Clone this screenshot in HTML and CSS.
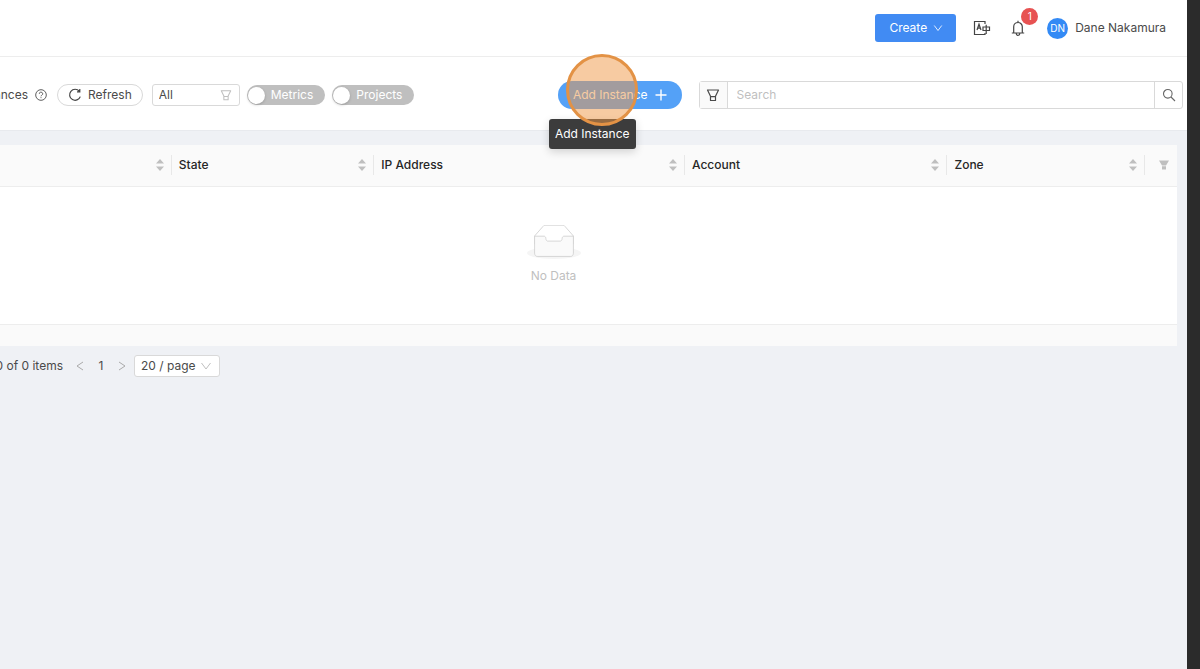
FILE: index.html
```
<!DOCTYPE html>
<html lang="en">
<head>
<meta charset="utf-8">
<title>Instances</title>
<link rel="stylesheet" href="styles.css">
</head>
<body>
<svg class="defs" aria-hidden="true">
  <symbol id="sort" viewBox="0 0 8 12"><path fill="#bfbfbf" d="M4 0 8 4.500H0zM4 12 0 7.500h8z"/></symbol>
  <symbol id="funnel" viewBox="0 0 14 14"><path fill="none" stroke="currentColor" stroke-width="1.200" stroke-linejoin="round" d="M1.500 2h11L9.500 8.200V12.500h-5V8.200zM4.500 8.700h5"/></symbol>
  <symbol id="down" viewBox="0 0 12 12"><path fill="none" stroke="currentColor" stroke-width="1" d="M1.500 3 6 9l4.500-6"/></symbol>
</svg>
<div class="app">
  <div class="page">
    <header class="header">
      <button class="create">Create <svg class="chev"><use href="#down"/></svg></button>
      <button class="icon-button" aria-label="Language">
        <svg class="lang" viewBox="0 0 18 16" fill="none" stroke="#444" stroke-width="1.200"><path d="M12 4V1.500H1.500v13H12V13"/><path d="M4 10 6 4.200 8 10M4.600 8.200h2.800M10 7h6.500v3.500H10zM13.200 4.800v9.200"/></svg>
      </button>
      <button class="icon-button bell-button" aria-label="Notifications">
        <svg class="bell" viewBox="0 0 14 16" fill="none" stroke="#444" stroke-width="1.200"><path d="M2.700 13V6.800a4.300 4.300 0 0 1 8.600 0V13M.800 13h12.400M7 2.500V.800M5.200 13.500a1.800 1.800 0 0 0 3.600 0"/></svg>
        <span class="badge">1</span>
      </button>
      <a class="user" href="#"><span class="avatar">DN</span>Dane Nakamura</a>
    </header>
    <div class="toolbar">
      <div class="filters">
        <span class="crumb">ances</span>
        <svg class="help" viewBox="0 0 14 14" fill="none" stroke="#555" stroke-width="1.100"><circle cx="7" cy="7" r="6.200"/><path d="M5 5.600a2 1.900 0 1 1 3 1.600q-1 .500-1 1.300M7 9.600v1.100"/></svg>
        <button class="refresh"><svg viewBox="0 0 14 14" fill="none" stroke="#444" stroke-width="1.200"><path d="M11.300 3.200A5.500 5.500 0 1 0 12.300 8.600M11.800 1v2.800H9"/></svg>Refresh</button>
        <div class="select all">
          <select aria-label="Filter"><option>All</option></select>
          <svg><use href="#funnel"/></svg>
        </div>
        <label class="switch"><input type="checkbox">Metrics</label>
        <label class="switch"><input type="checkbox">Projects</label>
      </div>
      <div class="actions">
        <div class="add-wrap">
          <button class="add">Add Instance <svg viewBox="0 0 12 12"><path stroke="#fff" stroke-width="1.400" d="M6 .500v11M.500 6h11"/></svg></button>
          <div class="tooltip" role="tooltip">Add Instance</div>
          <div class="pointer"></div>
        </div>
        <form class="search">
          <button type="button" aria-label="Search filters"><svg><use href="#funnel"/></svg></button>
          <input type="text" placeholder="Search" aria-label="Search">
          <button type="submit" aria-label="Search"><svg viewBox="0 0 14 14" fill="none" stroke="#666" stroke-width="1.100"><circle cx="5.800" cy="5.800" r="4.300"/><path d="m9 9 4 4"/></svg></button>
        </form>
      </div>
    </div>
    <main class="content">
      <table class="grid">
        <colgroup><col class="c-name"><col class="c-state"><col class="c-ip"><col class="c-account"><col class="c-zone"><col></colgroup>
        <thead>
          <tr>
            <th><div class="cell"><span></span><svg><use href="#sort"/></svg></div></th>
            <th><div class="cell">State<svg><use href="#sort"/></svg></div></th>
            <th><div class="cell">IP Address<svg><use href="#sort"/></svg></div></th>
            <th><div class="cell">Account<svg><use href="#sort"/></svg></div></th>
            <th><div class="cell">Zone<svg><use href="#sort"/></svg></div></th>
            <th><div class="cell last"><svg class="filled" viewBox="0 0 10 10"><path fill="#bfbfbf" d="M0 .500h10L7 5.500H3zM3 6.300h4V9.500H3z"/></svg></div></th>
          </tr>
        </thead>
        <tbody>
          <tr><td colspan="6">
            <div class="empty">
              <svg viewBox="0 0 64 41"><ellipse cx="32" cy="33" rx="32" ry="7" fill="#f5f5f5"/><g stroke="#d0d0d0"><path fill="#fff" d="M55 12.760 44.854 1.258C44.367.474 43.656 0 42.907 0H21.093c-.749 0-1.460.474-1.947 1.257L9 12.761V22h46z"/><path fill="#fafafa" d="M41.613 15.931c0-1.605.994-2.930 2.227-2.931H55v20.137C55 35.260 53.680 37 52.050 37h-40.100C10.320 37 9 35.259 9 33.137V13h11.160c1.233 0 2.227 1.323 2.227 2.928v.022c0 1.605 1.005 2.901 2.237 2.901h14.752c1.232 0 2.237-1.308 2.237-2.913z"/></g></svg>
              No Data
            </div>
          </td></tr>
        </tbody>
        <tfoot><tr><td colspan="6"></td></tr></tfoot>
      </table>
      <nav class="pager" aria-label="Pagination">
        <span class="total">0 of 0 items</span>
        <button aria-label="Previous page"><svg viewBox="0 0 8 10"><path d="M7 1 1 5l6 4"/></svg></button>
        <button class="current">1</button>
        <button aria-label="Next page"><svg viewBox="0 0 8 10"><path d="m1 1 6 4-6 4"/></svg></button>
        <div class="select size">
          <select aria-label="Page size"><option>20 / page</option></select>
          <svg><use href="#down"/></svg>
        </div>
      </nav>
    </main>
  </div>
</div>
</body>
</html>
```
FILE: styles.css
```
* { box-sizing: border-box; }
body {
  margin: 0;
  font: 12px/20px Inter, "Liberation Sans", sans-serif;
  color: #4a4a4a;
  background: #2b2b2b;
}
button, input, select { font: inherit; color: inherit; margin: 0; }
button { padding: 0; border: 0; background: none; cursor: pointer; }
svg { display: block; flex: none; }
.defs { position: absolute; width: 0; height: 0; }

.app { min-height: 100vh; padding-right: 13px; display: flex; }
.page { flex: 1; min-width: 0; background: #eff1f5; }

.header {
  display: flex;
  align-items: center;
  justify-content: flex-end;
  height: 57px;
  padding-right: 21px;
  background: #fff;
  border-bottom: 1px solid #ededed;
}
.create {
  display: flex;
  align-items: center;
  gap: 6px;
  height: 28px;
  padding: 0 13px 0 14px;
  border-radius: 3px;
  background: #418bf3;
  color: #fff;
}
.chev { width: 10px; height: 10px; }
.icon-button { position: relative; margin-left: 17px; }
.lang { width: 18px; height: 16px; }
.bell-button { margin-left: 20px; }
.bell { width: 14px; height: 16px; }
.badge {
  position: absolute;
  left: 10px;
  top: -12px;
  width: 17px;
  height: 17px;
  border-radius: 50%;
  background: #e75252;
  color: #fff;
  font-size: 10px;
  line-height: 17px;
}
.user {
  display: flex;
  align-items: center;
  gap: 7px;
  margin-left: 22px;
  color: #4a4a4a;
  text-decoration: none;
}
.avatar {
  width: 21px;
  height: 21px;
  border-radius: 50%;
  background: #338af5;
  color: #fff;
  font-size: 10px;
  line-height: 21px;
  text-align: center;
}

.toolbar {
  display: flex;
  align-items: center;
  padding: 24px 0 21px;
  background: #fff;
  border-bottom: 1px solid #e8eaee;
}
.filters { display: flex; align-items: center; width: 47%; }
.crumb { display: flex; justify-content: flex-end; width: 28px; }
.help { width: 12px; height: 12px; margin-left: 7px; }
.refresh {
  display: flex;
  align-items: center;
  gap: 6px;
  height: 22px;
  margin: 0 9px 0 10px;
  padding: 0 10px;
  border: 1px solid #d9d9d9;
  border-radius: 11px;
}
.refresh svg { width: 14px; height: 14px; }
.select { position: relative; }
.select select {
  appearance: none;
  width: 100%;
  height: 22px;
  padding: 0 6px;
  border: 1px solid #d9d9d9;
  border-radius: 3px;
  background: #fff;
}
.select svg {
  position: absolute;
  right: 8px;
  top: 5px;
  width: 12px;
  height: 12px;
  color: #bfbfbf;
  pointer-events: none;
}
.all { width: 88px; }
.switch {
  display: flex;
  align-items: center;
  gap: 6px;
  height: 20px;
  margin-left: 7px;
  padding: 0 12px 0 1px;
  border-radius: 10px;
  background: #bfbfbf;
  color: #fff;
}
.switch input {
  appearance: none;
  width: 17px;
  height: 17px;
  margin: 0;
  border-radius: 50%;
  background: #fff;
  box-shadow: 0 1px 3px rgba(0, 0, 0, .2);
}

.actions { display: flex; flex: 1; gap: 17px; padding-right: 4px; }
.add-wrap { position: relative; }
.add {
  display: flex;
  align-items: center;
  gap: 7px;
  height: 28px;
  padding: 0 15px;
  border-radius: 14px;
  background: #54a1f7;
  color: #fff;
  white-space: nowrap;
}
.add svg { width: 12px; height: 12px; }
.tooltip {
  position: absolute;
  left: -9px;
  top: 38px;
  z-index: 1;
  padding: 5px 6px;
  border-radius: 3px;
  background: #3c3c3c;
  color: #fff;
  white-space: nowrap;
  box-shadow: 0 3px 8px rgba(0, 0, 0, .16);
}
.pointer {
  position: absolute;
  left: 8px;
  top: -27px;
  z-index: 2;
  width: 72px;
  height: 72px;
  border: 3px solid #e39245;
  border-radius: 50%;
  background: rgba(239, 151, 69, .5);
  pointer-events: none;
}
.search {
  display: flex;
  flex: 1;
  height: 28px;
  border: 1px solid #d9d9d9;
  border-radius: 3px;
}
.search button { display: grid; place-items: center; width: 27px; }
.search button:first-child { background: #fafafa; }
.search svg { width: 14px; height: 14px; }
.search input {
  flex: 1;
  min-width: 0;
  padding: 0 9px;
  border: solid #d9d9d9;
  border-width: 0 1px;
  outline: 0;
}
.search input::placeholder { color: #bfbfbf; opacity: 1; }

.content { padding-top: 14px; }
.grid {
  width: calc(100% - 10px);
  border-collapse: collapse;
  table-layout: fixed;
  background: #fff;
}
.c-name { width: 14.6%; }
.c-state { width: 17.2%; }
.c-ip { width: 26.4%; }
.c-account { width: 22.3%; }
.c-zone { width: 16.8%; }
th, td { padding: 0; }
th {
  height: 41px;
  background: #fafafa;
  border-bottom: 1px solid #ededed;
  color: #262626;
  font-weight: 500;
}
.cell {
  display: flex;
  align-items: center;
  justify-content: space-between;
  height: 20px;
  padding: 0 7px;
  border-right: 1px solid #e8e8e8;
}
.cell svg { width: 8px; height: 12px; }
.cell.last { justify-content: center; padding-left: 12px; border: 0; }
.cell .filled { width: 10px; height: 10px; }
.empty {
  display: flex;
  flex-direction: column;
  align-items: center;
  gap: 6px;
  padding: 38px 70px 38px 0;
  color: #bfbfbf;
}
.empty svg { width: 54px; height: 35px; }
tfoot td { height: 22px; background: #fafafa; border-top: 1px solid #ededed; }

.pager { display: flex; align-items: center; margin-top: 9px; }
.total {
  display: flex;
  justify-content: flex-end;
  width: 63px;
  margin-right: 10px;
  white-space: nowrap;
}
.pager button { display: grid; place-items: center; width: 14px; height: 22px; }
.pager button svg { width: 8px; height: 10px; fill: none; stroke: #aaa; }
.pager .current { margin: 0 7px; }
.size { width: 86px; margin-left: 5px; }
```
